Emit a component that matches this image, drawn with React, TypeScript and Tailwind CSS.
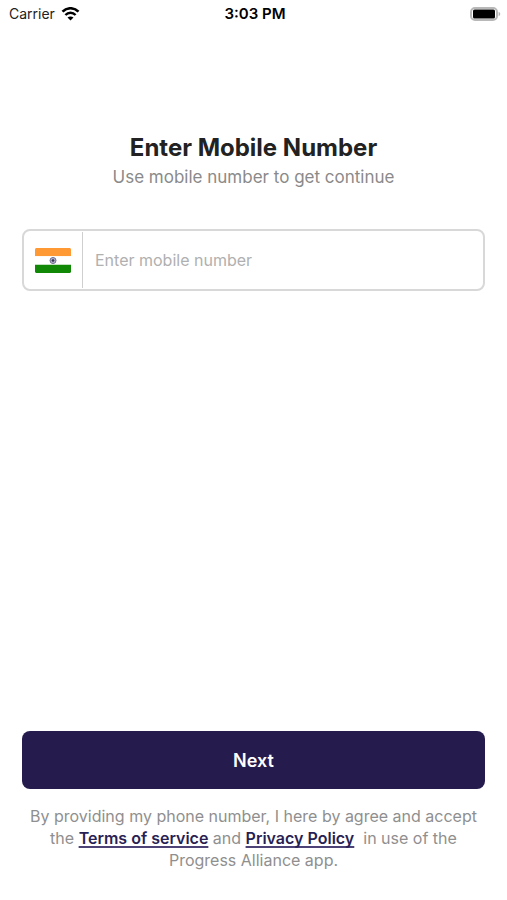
import { useState } from "react";

const linkClass =
  "font-semibold text-[#2a1f54] underline decoration-[#4d4275] decoration-2 underline-offset-2 [text-decoration-skip-ink:none]";

function StatusBar() {
  return (
    <header className="grid h-7 grid-cols-3 items-center pl-[9px] pr-1.5 text-sm leading-5 text-[#222]">
      <div className="flex items-center gap-1.5">
        <span>Carrier</span>
        <svg className="h-3.5 w-[19px]" viewBox="0 0 18 14" fill="none" aria-label="Wi-Fi">
          <path d="M1 4.7C5.4 .1 12.6 .1 17 4.7" stroke="#000" strokeWidth="2.6" />
          <path d="M3.9 8c2.9-3 7.3-3 10.2 0" stroke="#000" strokeWidth="2.4" />
          <path d="M9 13.6 6 10.6c1.7-1.6 4.300-1.600 6 0z" fill="#000" />
        </svg>
      </div>
      <span className="text-center text-[15px] font-semibold text-black">3:03 PM</span>
      <svg className="h-[15px] w-[31px] justify-self-end" viewBox="0 0 31 15" aria-label="Battery">
        <rect x="1" y="1" width="26" height="12" rx="4" fill="#fff" stroke="#b8b8b8" strokeWidth="2" />
        <rect x="3" y="2.5" width="22" height="9" rx="1.6" fill="#000" />
        <path d="M28.6 4.8c2.2.8 2.2 3.6 0 4.4z" fill="#b4b4b4" />
      </svg>
    </header>
  );
}

function IndiaFlag() {
  return (
    <svg className="h-[25px] w-9" viewBox="0 0 36 25" aria-label="India">
      <path d="M0 8.3V1.5C0 .7.7 0 1.5 0h33c.8 0 1.5.7 1.5 1.5v6.8z" fill="#ff9933" />
      <path d="M0 8.3h36v8.4H0z" fill="#fff" />
      <path d="M0 16.7h36v6.8c0 .8-.7 1.5-1.5 1.5h-33C.7 25 0 24.3 0 23.5z" fill="#128807" />
      <circle cx="18" cy="12.5" r="3" fill="#c9c9e2" stroke="#6a6a8c" strokeWidth="1" />
      <path
        d="M18 9.5v6M15 12.5h6M15.9 10.4l4.2 4.2M20.1 10.4l-4.2 4.2"
        stroke="#77779c"
        strokeWidth=".5"
      />
      <circle cx="18" cy="12.5" r="1.3" fill="#33334f" />
    </svg>
  );
}

export default function App() {
  const [mobile, setMobile] = useState("");

  return (
    <div className="flex min-h-screen flex-col bg-white font-[Inter,sans-serif]">
      <StatusBar />

      <form
        className="flex flex-1 flex-col px-[22px] pb-[29px] pt-[104px]"
        onSubmit={(event) => event.preventDefault()}
      >
        <h1 className="text-center text-2xl font-bold leading-8 text-[#222]">
          Enter Mobile Number
        </h1>
        <p className="text-center text-[17px] leading-[26px] text-[#8a8a8a]">
          Use mobile number to get continue
        </p>

        <div className="mt-[39px] flex h-[62px] items-stretch rounded-lg border-2 border-[#d8d8d8]">
          <button
            type="button"
            aria-label="Select country"
            className="my-px flex w-[59px] items-center justify-center border-r border-[#cfcfcf]"
          >
            <IndiaFlag />
          </button>
          <input
            type="tel"
            aria-label="Mobile number"
            placeholder="Enter mobile number"
            value={mobile}
            onChange={(event) => setMobile(event.target.value)}
            className="min-w-0 flex-1 rounded-r-lg px-3 text-base text-[#222] outline-none placeholder:text-[#b0b0b0]"
          />
        </div>

        <button
          type="submit"
          className="mt-auto h-[58px] rounded-lg bg-[#261b4d] pt-0.5 text-lg font-semibold text-white"
        >
          Next
        </button>

        <p className="mt-4 text-center text-base leading-[22px] text-[#8f8f8f]">
          By providing my phone number, I here by agree and accept
          <br />
          the{" "}
          <a href="#terms" className={linkClass}>
            Terms of service
          </a>{" "}
          and{" "}
          <a href="#privacy" className={linkClass}>
            Privacy Policy
          </a>
          {" \u00a0"}in use of the
          <br />
          Progress Alliance app.
        </p>
      </form>
    </div>
  );
}
